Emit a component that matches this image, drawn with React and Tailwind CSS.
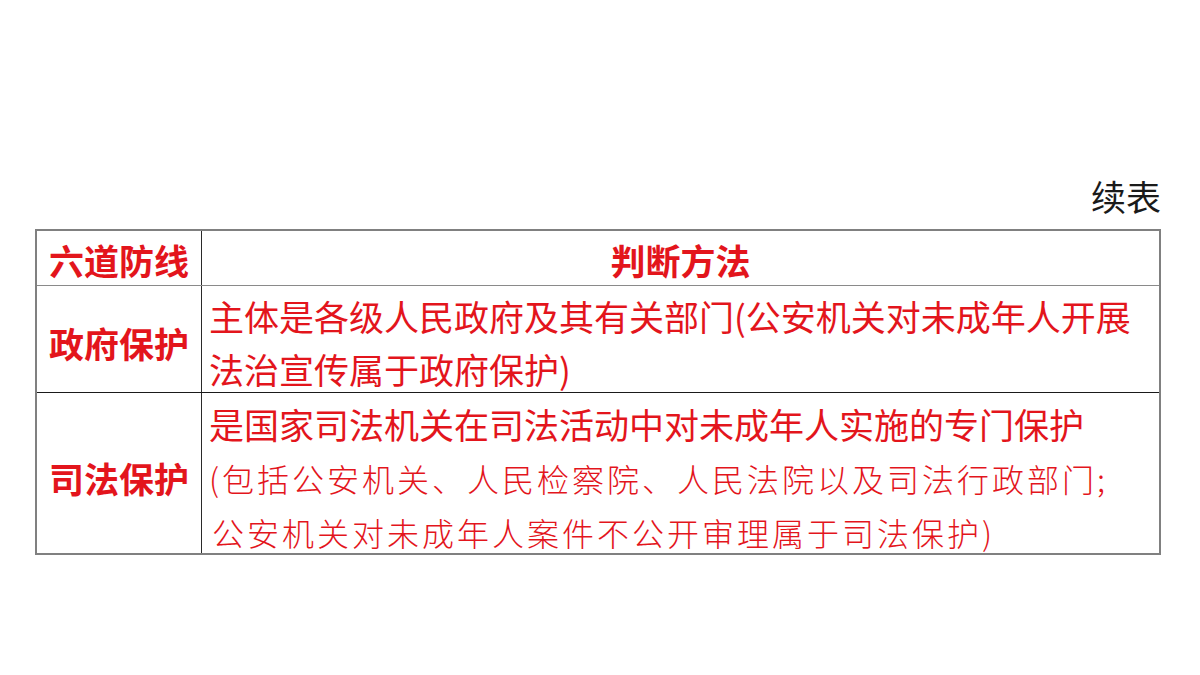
export default function App() {
  const sans = { fontFamily: '"Noto Sans CJK SC", "Noto Sans", sans-serif' };
  return (
    <div className="w-[1200px] h-[675px] bg-white overflow-hidden" style={sans}>
      <div className="pt-[176px] pl-[35px] w-[1161px]">
        <div className="h-[53px] text-right text-[35px] leading-[40px] text-[#1a1a1a]">续表</div>

        <div className="w-[1126px] border-2 border-[#808080] text-[#e3151c]">
          {/* header */}
          <div className="flex h-[55px] border-b border-[#8a8a8a]">
            <div className="w-[165px] shrink-0 border-r border-[#2a2a2a] flex items-center justify-center pt-[3px] text-[35px] font-bold leading-none">
              六道防线
            </div>
            <div className="flex-1 flex items-center justify-center pt-[3px] text-[35px] font-bold leading-none">
              判断方法
            </div>
          </div>

          {/* 政府保护 */}
          <div className="flex h-[107px] border-b border-[#1a1a1a]">
            <div className="w-[165px] shrink-0 border-r border-[#2a2a2a] flex items-center justify-center pt-[6px] text-[35px] font-bold leading-none">
              政府保护
            </div>
            <div className="flex-1 pl-[7px] pt-[3px] text-[35px] leading-[53px] whitespace-nowrap">
              <div>主体是各级人民政府及其有关部门(公安机关对未成年人开展</div>
              <div>法治宣传属于政府保护)</div>
            </div>
          </div>

          {/* 司法保护 */}
          <div className="flex h-[160px]">
            <div className="w-[165px] shrink-0 border-r border-[#2a2a2a] flex items-center justify-center pt-[8px] text-[35px] font-bold leading-none">
              司法保护
            </div>
            <div className="flex-1 pl-[7px] pt-[4px] whitespace-nowrap">
              <div className="text-[35px] leading-[54px]">是国家司法机关在司法活动中对未成年人实施的专门保护</div>
              <div className="text-[32px] leading-[54px] tracking-[3px] font-light">
                (包括公安机关、人民检察院、人民法院以及司法行政部门;
              </div>
              <div className="text-[32px] leading-[54px] tracking-[3px] font-light pl-[3px]">
                公安机关对未成年人案件不公开审理属于司法保护)
              </div>
            </div>
          </div>
        </div>
      </div>
    </div>
  );
}
